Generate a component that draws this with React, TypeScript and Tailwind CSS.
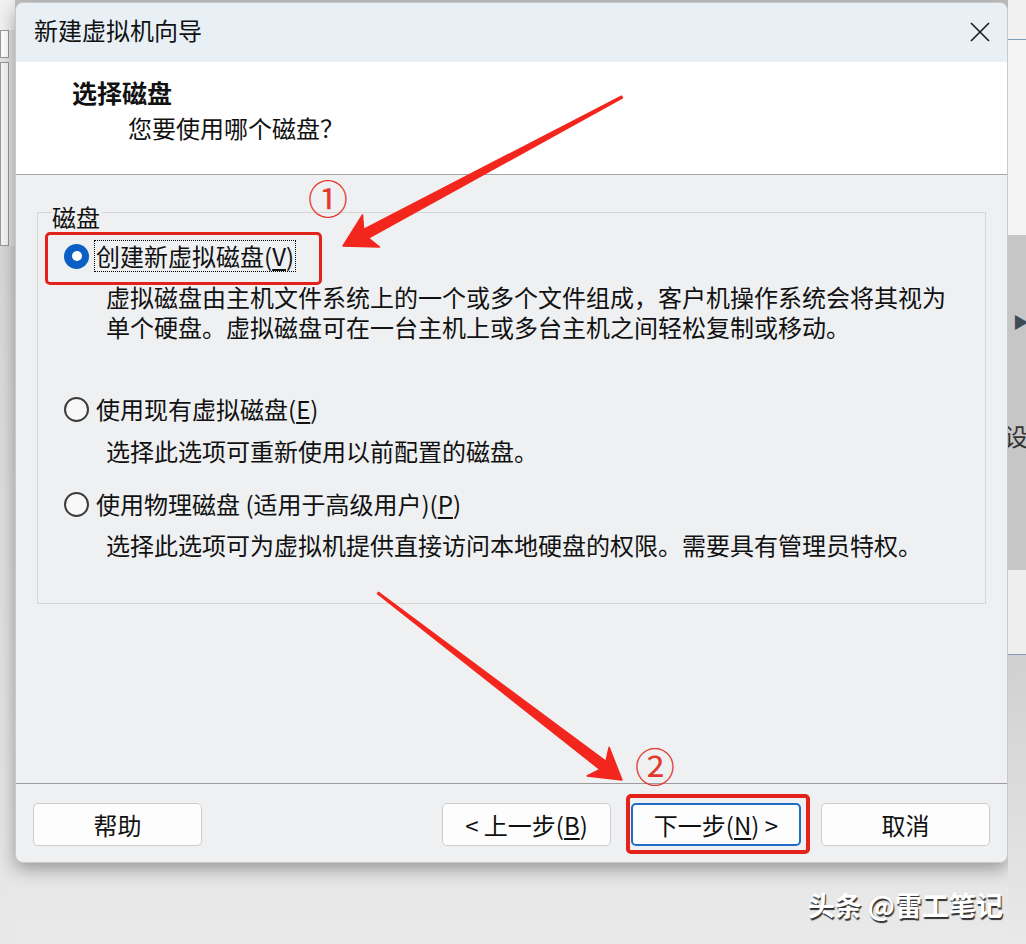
import { ReactNode } from 'react';

function Radio({ checked }: { checked?: boolean }) {
  if (checked) {
    return (
      <span className="w-[25px] h-[25px] rounded-full bg-[#0b5fc4] flex items-center justify-center shrink-0">
        <span className="w-[10px] h-[10px] rounded-full bg-white" />
      </span>
    );
  }
  return <span className="w-[25px] h-[25px] rounded-full border-[2px] border-[#3c3c3c] bg-[#f8f8f8] shrink-0" />;
}

function Key({ children }: { children: ReactNode }) {
  return <span className="underline underline-offset-[3px] decoration-[1.5px]">{children}</span>;
}

function Btn({ children, primary }: { children: ReactNode; primary?: boolean }) {
  return (
    <div
      className={
        'h-[43px] flex items-center justify-center rounded-[5px] bg-[#fdfdfd] text-[24px] text-[#111] ' +
        (primary ? 'w-[170px] border-2 border-[#1f6cc6]' : 'w-[169px] border border-[#cdcdcd]')
      }
    >
      {children}
    </div>
  );
}

export default function App() {
  return (
    <div className="relative w-[1026px] h-[944px] overflow-hidden flex bg-[#e6e6e6] font-['Noto_Sans_CJK_SC','Noto_Sans',sans-serif] text-[#111]">
      {/* window behind, left edge */}
      <div className="w-[15px] shrink-0 flex flex-col bg-[#e4e4e4]">
        <div className="h-[30px] bg-[#f2f2f2]" />
        <div className="h-[28px] w-[9px] border border-[#9a9a9a] bg-white" />
        <div className="mt-[4px] h-[184px] w-[9px] border border-[#9a9a9a] bg-[#f6f6f6]" />
        <div className="flex-1 bg-gradient-to-b from-[#d8d8d8] to-[#e8e8e8]" />
      </div>

      {/* dialog column */}
      <div className="w-[993px] shrink-0 flex flex-col bg-gradient-to-b from-[#c2c2c2] via-[#dadada] to-[#e9e9e9]">
        <div className="mt-[2px] h-[861px] flex flex-col rounded-[8px] overflow-hidden bg-[#eff0f1] border border-[#c9c9c9] shadow-[0_6px_18px_rgba(0,0,0,0.35)]">
          {/* title bar */}
          <div className="h-[59px] shrink-0 bg-[#e8f0f6] flex items-center pl-[18px] pr-[16px]">
            <span className="text-[24px] leading-[30px] -mt-[6px]">新建虚拟机向导</span>
            <svg className="ml-auto -mt-[2px]" width="22" height="22" viewBox="0 0 22 22">
              <path d="M2 2 L20 20 M20 2 L2 20" stroke="#1a1a1a" strokeWidth="1.6" fill="none" />
            </svg>
          </div>

          {/* header */}
          <div className="h-[113px] shrink-0 bg-white border-b border-[#a5a5a5] pt-[15px]">
            <div className="pl-[56px] text-[25px] leading-[30px] font-bold">选择磁盘</div>
            <div className="pl-[112px] mt-[6px] text-[24px] leading-[30px]">您要使用哪个磁盘？</div>
          </div>

          {/* body */}
          <div className="flex-1 pt-[37px] px-[21px]">
            <div className="border border-[#d6d6d6] pb-[43px] text-[24px]">
              <div className="-mt-[11px] ml-[14px] w-fit bg-[#eff0f1] leading-[30px] pr-[2px]">磁盘</div>

              <div className="mt-[8px] h-[32px] ml-[26px] flex items-center gap-[5px]">
                <Radio checked />
                <span className="border border-dotted border-black px-[1px] leading-[30px]">
                  创建新虚拟磁盘(<Key>V</Key>)
                </span>
              </div>
              <div className="mt-[10px] pl-[68px]">
                <div className="h-[30px] leading-[30px]">虚拟磁盘由主机文件系统上的一个或多个文件组成，客户机操作系统会将其视为</div>
                <div className="h-[30px] leading-[30px]">单个硬盘。虚拟磁盘可在一台主机上或多台主机之间轻松复制或移动。</div>
              </div>

              <div className="mt-[51px] h-[32px] ml-[26px] flex items-center gap-[7px]">
                <Radio />
                <span className="leading-[30px]">
                  使用现有虚拟磁盘(<Key>E</Key>)
                </span>
              </div>
              <div className="mt-[11px] pl-[68px] leading-[30px]">选择此选项可重新使用以前配置的磁盘。</div>

              <div className="mt-[22px] h-[32px] ml-[26px] flex items-center gap-[7px]">
                <Radio />
                <span className="leading-[30px]">
                  使用物理磁盘 (适用于高级用户)(<Key>P</Key>)
                </span>
              </div>
              <div className="mt-[10px] pl-[68px] leading-[30px]">
                选择此选项可为虚拟机提供直接访问本地硬盘的权限。需要具有管理员特权。
              </div>
            </div>
          </div>

          {/* footer */}
          <div className="h-[79px] shrink-0 border-t border-[#9c9c9c] pt-[19px] px-[17px] flex items-start">
            <Btn>帮助</Btn>
            <div className="ml-auto flex gap-[20px]">
              <Btn>
                &lt; 上一步(<Key>B</Key>)
              </Btn>
              <Btn primary>
                下一步(<Key>N</Key>) &gt;
              </Btn>
              <Btn>取消</Btn>
            </div>
          </div>
        </div>

        {/* watermark */}
        <div className="flex justify-end pr-[5px] pt-[27px]">
          <span className="text-[27px] leading-[30px] font-bold text-white [text-shadow:1px_2px_1px_rgba(0,0,0,0.8)]">
            头条 @雷工笔记
          </span>
        </div>
      </div>

      {/* window behind, right edge */}
      <div className="w-[18px] shrink-0 flex flex-col">
        <div className="h-[40px] bg-[#f1f1f1] border-b border-[#7f9db7]" />
        <div className="h-[195px] bg-[#f4f4f4]" />
        <div className="h-[335px] bg-[#c6c6c6] flex flex-col text-[#333] overflow-hidden">
          <span className="mt-[76px] ml-[5px] text-[16px] leading-[20px] text-[#3d4b57]">▶</span>
          <span className="mt-[90px] -ml-[4px] text-[24px] leading-[30px] whitespace-nowrap">设置</span>
        </div>
        <div className="h-[85px] bg-[#eeeeee] border-b border-[#7f9db7]" />
        <div className="flex-1 bg-gradient-to-b from-[#d0d0d0] to-[#e9e9e9]" />
      </div>

      {/* annotations */}
      <div className="absolute left-[45px] top-[232px] w-[277px] h-[53px] border-[3px] border-[#e3221c] rounded-[5px]" />
      <div className="absolute left-[626px] top-[794px] w-[184px] h-[60px] border-[4px] border-[#e3221c] rounded-[5px]" />
      <div className="absolute left-[306px] top-[176px] w-[44px] h-[42px] flex items-center justify-center text-[40px] leading-none text-[#e33a30]">
        ①
      </div>
      <div className="absolute left-[633px] top-[744px] w-[44px] h-[42px] flex items-center justify-center text-[40px] leading-none text-[#e33a30]">
        ②
      </div>
      <svg className="absolute inset-0 pointer-events-none" width="1026" height="944" viewBox="0 0 1026 944">
        <polygon
          points="343,246 362.5,215 363.6,229.3 621.5,96.1 622.5,97.9 368.4,238.1 379.5,247"
          fill="#f3261d"
          stroke="#f3261d"
          strokeWidth="1.5"
          strokeLinejoin="round"
        />
        <polygon
          points="622,780 609.1,747.4 606,761.4 378.5,592.4 377.5,593.6 599.9,769.4 587.2,776"
          fill="#f3261d"
          stroke="#f3261d"
          strokeWidth="1.5"
          strokeLinejoin="round"
        />
      </svg>
    </div>
  );
}
